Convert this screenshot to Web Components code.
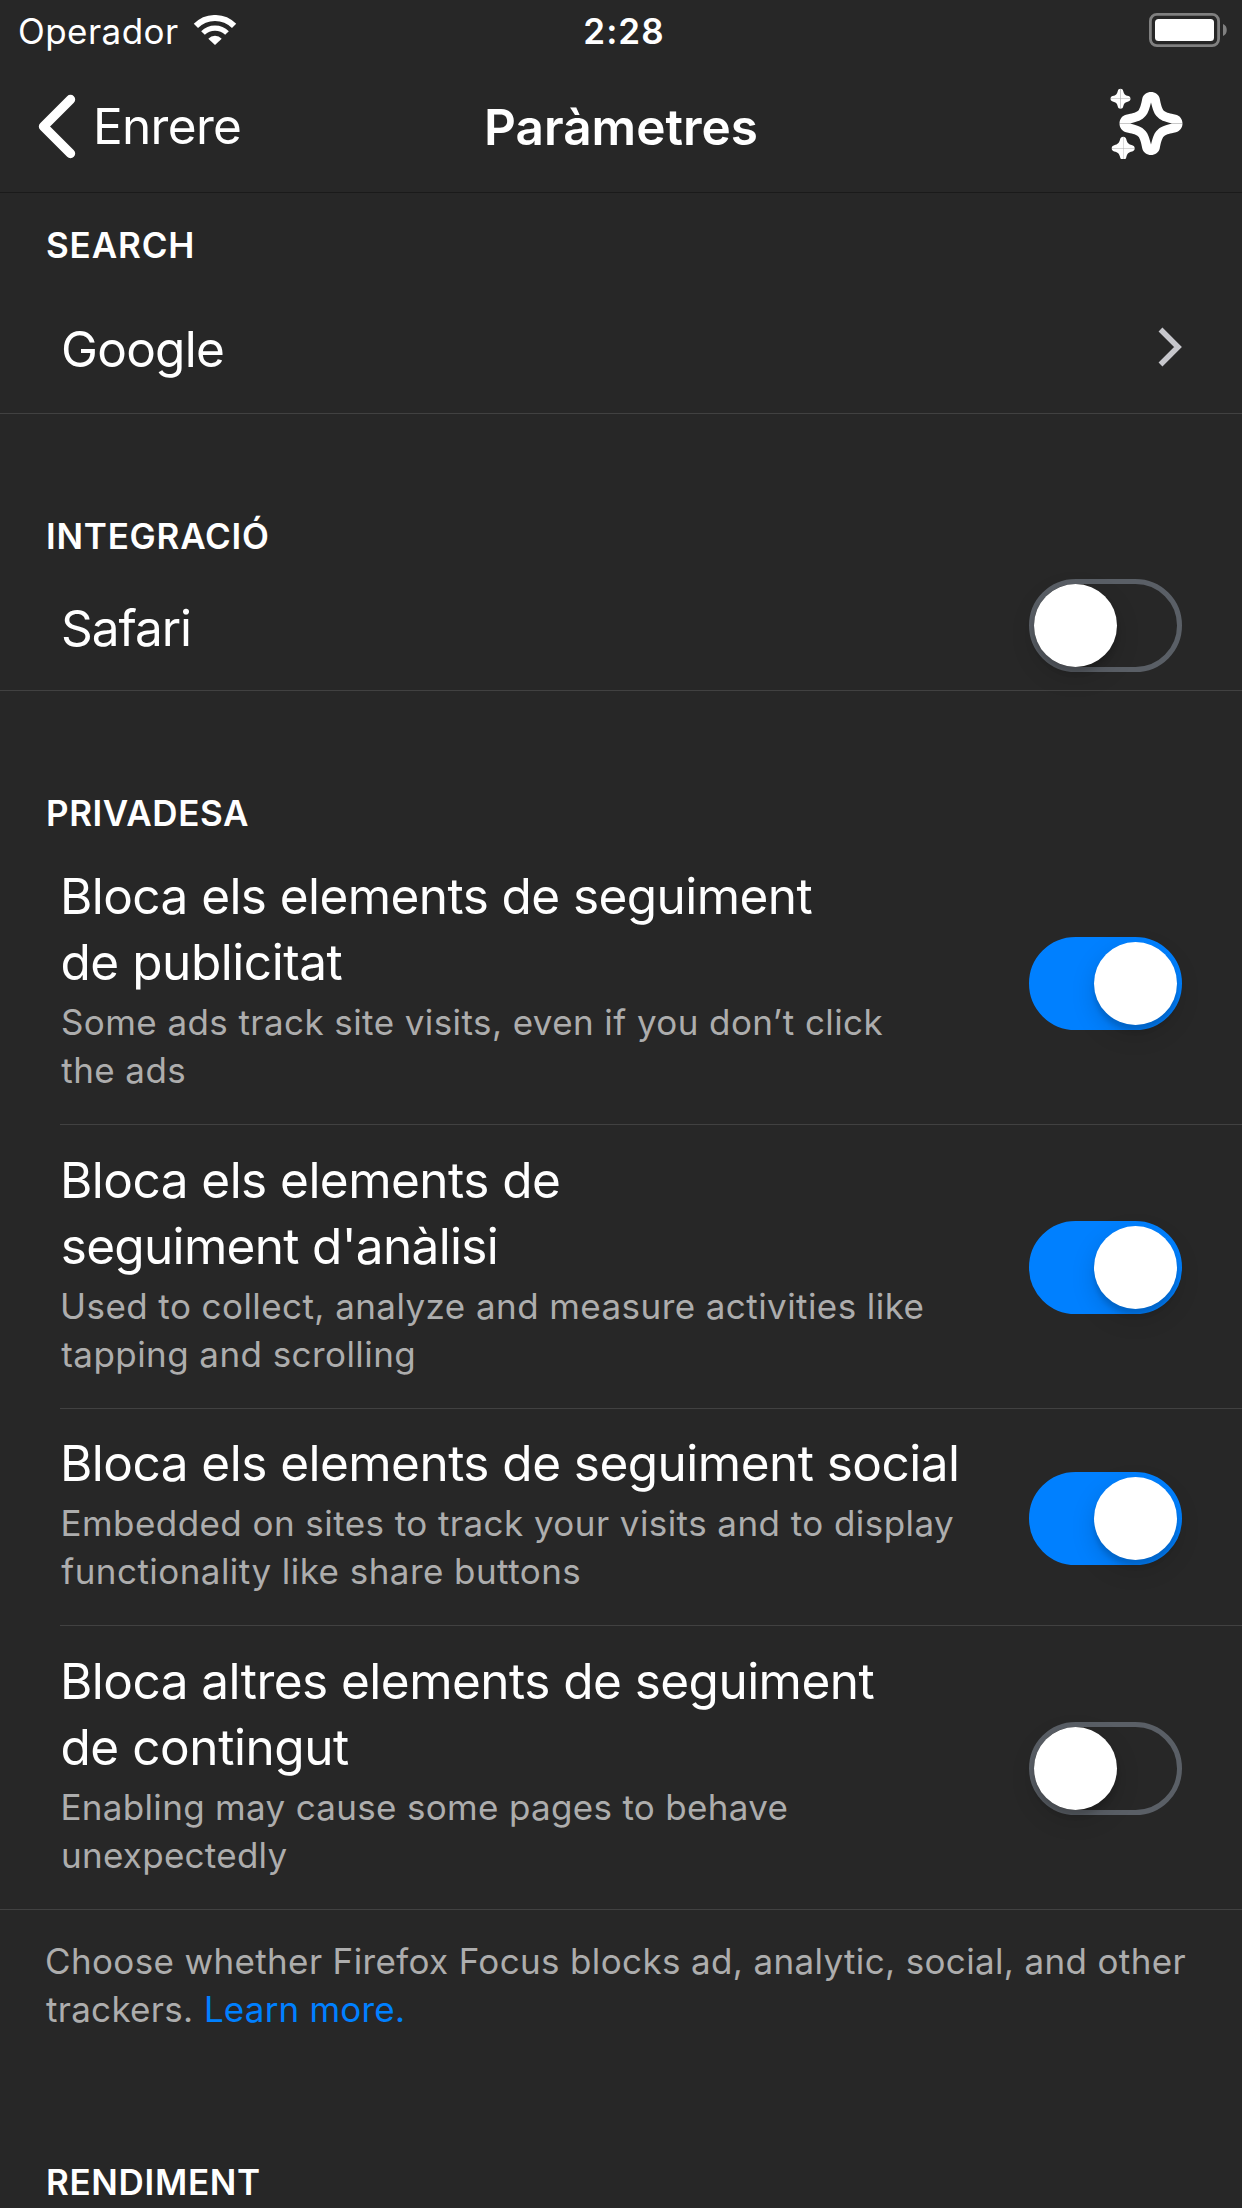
<!DOCTYPE html>
<html lang="ca">
<head>
<meta charset="utf-8">
<title>Paràmetres</title>
<style>
html,body{margin:0;background:#272727}
body{width:1242px;height:2208px;overflow:hidden;font-family:Inter,"Liberation Sans",sans-serif;color:#fff}
</style>
</head>
<body>
<settings-screen></settings-screen>
<script>
const define = (name, html, setup) => customElements.define(name, class extends HTMLElement {
  constructor() {
    super();
    this.attachShadow({ mode: 'open' }).innerHTML = html;
  }
  connectedCallback() { if (setup) setup.call(this); }
});

/* One line of text, tracked so that its drawn width equals the "width" attribute.
   "ink" optionally sets where the first glyph's left edge falls from the container's edge. */
const ctx = document.createElement('canvas').getContext('2d');
const KINDS = { body: [49.5, 400], title: [49.5, 600], small: [35, 400], caps: [35, 600], clock: [35, 600] };
define('text-line', `<style>
:host{display:block;white-space:pre;font-size:49.5px;line-height:66px;font-weight:400}
:host([kind=title]){font-weight:600}
:host([kind=small]),:host([kind=caps]),:host([kind=clock]){font-size:35px;line-height:48px}
:host([kind=caps]),:host([kind=clock]){font-weight:600}
</style><slot></slot>`, function () {
  const [size, weight] = KINDS[this.getAttribute('kind') || 'body'];
  const text = this.textContent, width = +this.getAttribute('width');
  ctx.font = `${weight} ${size}px Inter`;
  const m = ctx.measureText(text);
  const natural = m.actualBoundingBoxRight + m.actualBoundingBoxLeft;
  this.style.letterSpacing = ((width - natural) / (text.length - 1)).toFixed(3) + 'px';
  if (this.hasAttribute('ink'))
    this.style.marginLeft = (+this.getAttribute('ink') + m.actualBoundingBoxLeft).toFixed(2) + 'px';
});

define('status-bar', `<style>
:host{display:grid;grid-template-columns:1fr auto 1fr;height:63px;align-items:start;padding:7px 14px 0;box-sizing:border-box}
.l{display:flex;gap:14px}.r{display:flex;justify-content:flex-end}
svg{display:block}
.l svg{margin-top:8px}.r svg{margin-top:6px}
</style>
<div class="l"><text-line kind="small" ink="6" width="158">Operador</text-line>
<svg width="44" height="30" viewBox="-22 -30 44 30" fill="none" stroke="#fff">
<path stroke-width="6" d="M-19.1-19.1A27 27 0 0 1 19.1-19.1"/><path stroke-width="5.2" d="M-12-12A17 17 0 0 1 12-12"/><path fill="#fff" stroke="none" d="M0 0L-6.7-6.3A9.3 9.3 0 0 1 6.7-6.3Z"/></svg></div>
<text-line kind="clock" width="77" style="padding-left:6px">2:28</text-line>
<div class="r"><svg width="79" height="34" viewBox="0 0 79 34"><rect x="1.4" y="1.4" width="68.2" height="31.2" rx="6.5" fill="none" stroke="#808080" stroke-width="2.8"/><rect x="6" y="6" width="59" height="22" rx="3.5" fill="#fff"/><path d="M74 11C79 12.500 79 21.500 74 23Z" fill="#808080"/></svg></div>`);

define('nav-bar', `<style>
:host{display:grid;grid-template-columns:1fr auto 1fr;height:130px;box-sizing:border-box;padding:0 37px;border-bottom:1px solid #1a1a1a}
.l{display:flex}.r{display:flex;justify-content:flex-end}
svg{display:block}
.l svg{margin:31px 17px 0 0}.l text-line{margin-top:30px}.t{margin-top:31px}.r svg{margin:24px 21.500px 0 0}
</style>
<div class="l"><svg width="39" height="66" viewBox="0 0 39 66" fill="none" stroke="#fff" stroke-width="9.4" stroke-linecap="round"><path stroke-linejoin="round" d="M33.500 5.500L6.500 32.500L33.500 59.500"/></svg><text-line ink="4" width="143">Enrere</text-line></div>
<text-line class="t" kind="title" width="269.700">Paràmetres</text-line>
<div class="r"><svg width="74" height="72" viewBox="-41 -36.500 74 72" fill="#fff"><defs>
<path id="q" d="M0 0V-1C.15-1 .24-.92 .27-.78C.34-.46 .46-.34 .78-.27C.92-.24 1-.15 1 0Z"/>
<g id="s"><use href="#q"/><use href="#q" transform="rotate(90)"/><use href="#q" transform="rotate(180)"/><use href="#q" transform="rotate(270)"/></g>
<path id="b" d="M0-31.500C4-31.500 7.800-29 8.700-25C10-18.500 10.800-16 12.200-13.600Q12.800-12.800 13.600-12.200C16-10.800 18.500-10 25-8.700C29-7.800 31.500-4 31.500 0H21C13-2 9-3.500 6.500-6.500C3.500-9 2-13 0-21Z"/></defs>
<use href="#b"/><use href="#b" transform="rotate(90)"/><use href="#b" transform="rotate(180)"/><use href="#b" transform="rotate(270)"/>
<use href="#s" transform="translate(-30.500 -24.700) scale(10)"/><use href="#s" transform="translate(-27.800 24.800) scale(11.500)"/></svg></div>`);

define('toggle-switch', `<style>
:host{display:flex;flex:none;box-sizing:border-box;width:153px;height:93px;border-radius:47px;border:5px solid #5a5f66}
:host([on]){background:#0080ff;border-color:#0080ff;justify-content:flex-end}
i{display:block;width:83px;height:83px;border-radius:50%;background:#fff;box-shadow:0 9px 24px rgba(0,0,0,.15),0 6px 5px rgba(0,0,0,.13)}
:host(:not([on])) i{margin-left:-.5px}
</style><i></i>`);

define('section-title', `<style>:host{display:block;padding-left:44px}</style><slot></slot>`);

define('settings-row', `<style>
:host{display:flex;box-sizing:border-box;justify-content:space-between;padding-right:60px;margin-left:60px;border-bottom:1px solid #414141}
:host([wide]){margin-left:0;padding-left:60px}
.sub{display:block;margin-top:3px;color:#adadad}
</style><div><slot></slot><div class="sub"><slot name="detail"></slot></div></div><slot name="control"></slot>`);

define('settings-screen', `<style>
:host{display:block}
svg{display:block}
.foot{padding:27px 0 0 44px;color:#adadad}.foot div{display:flex}
a{color:#0080ff;text-decoration:none;margin-left:10.500px}
</style>
<status-bar></status-bar>
<nav-bar></nav-bar>
<section-title style="padding-top:28px"><text-line kind="caps" ink="3" width="145.300">SEARCH</text-line></section-title>
<settings-row wide style="height:145px;padding-top:47px"><text-line ink="3" width="160">Google</text-line>
<svg slot="control" width="25" height="40" viewBox="0 0 25 40" style="margin-top:11px" fill="none" stroke="#c7c7cc" stroke-width="5.500"><path d="M3.500 2.500L21 20L3.500 37.500"/></svg></settings-row>
<section-title style="padding-top:98px"><text-line kind="caps" ink="4" width="220">INTEGRACIÓ</text-line></section-title>
<settings-row wide style="height:131px;padding-top:35px"><text-line ink="3" width="127">Safari</text-line><toggle-switch slot="control" style="margin-top:-16px"></toggle-switch></settings-row>
<section-title style="padding-top:98px"><text-line kind="caps" ink="4" width="200">PRIVADESA</text-line></section-title>
<settings-row style="height:288px;padding-top:26px"><text-line ink="4" width="748.500">Bloca els elements de seguiment</text-line><text-line ink="2.500" width="280">de publicitat</text-line>
<text-line slot="detail" kind="small" ink="2" width="820.500">Some ads track site visits, even if you don’t click</text-line><text-line slot="detail" kind="small" ink="1.300" width="123">the ads</text-line><toggle-switch on slot="control" style="margin-top:74px"></toggle-switch></settings-row>
<settings-row style="height:284px;padding-top:22px"><text-line ink="4" width="495">Bloca els elements de</text-line><text-line ink="2.700" width="434">seguiment d'anàlisi</text-line>
<text-line slot="detail" kind="small" ink="3" width="859.500">Used to collect, analyze and measure activities like</text-line><text-line slot="detail" kind="small" ink="1.300" width="352">tapping and scrolling</text-line><toggle-switch on slot="control" style="margin-top:74px"></toggle-switch></settings-row>
<settings-row style="height:217px;padding-top:21px"><text-line ink="4" width="893">Bloca els elements de seguiment social</text-line>
<text-line slot="detail" kind="small" ink="3.500" width="889.500">Embedded on sites to track your visits and to display</text-line><text-line slot="detail" kind="small" ink="1.300" width="518">functionality like share buttons</text-line><toggle-switch on slot="control" style="margin-top:42px"></toggle-switch></settings-row>
<settings-row wide style="height:284px;padding-top:22px"><text-line ink="4" width="810.500">Bloca altres elements de seguiment</text-line><text-line ink="2.500" width="286.500">de contingut</text-line>
<text-line slot="detail" kind="small" ink="3.500" width="723">Enabling may cause some pages to behave</text-line><text-line slot="detail" kind="small" ink="3" width="223.500">unexpectedly</text-line><toggle-switch slot="control" style="margin-top:74px"></toggle-switch></settings-row>
<div class="foot"><text-line kind="small" ink="3" width="1138.500">Choose whether Firefox Focus blocks ad, analytic, social, and other</text-line><div><text-line kind="small" ink="2" width="145">trackers.</text-line><a><text-line kind="small" ink="3" width="196">Learn more.</text-line></a></div></div>
<section-title style="padding-top:125px"><text-line kind="caps" ink="4" width="211">RENDIMENT</text-line></section-title>`);
</script>
</body>
</html>
